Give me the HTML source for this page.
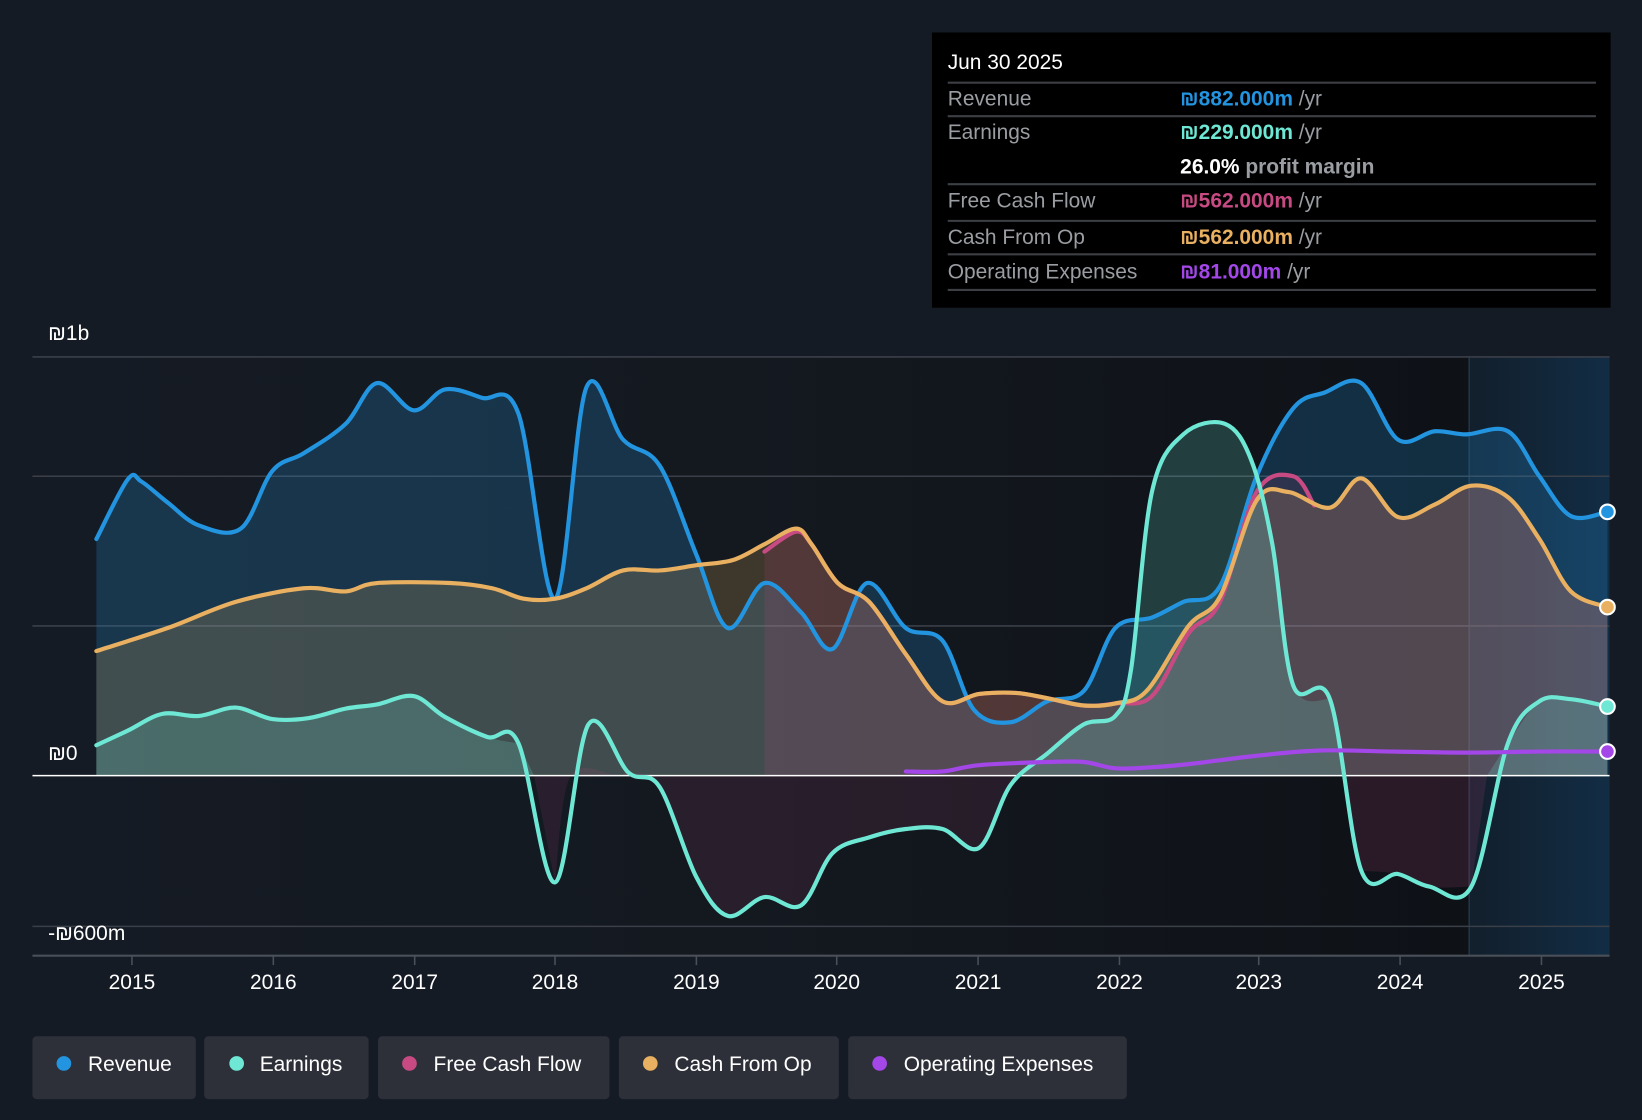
<!DOCTYPE html>
<html><head><meta charset="utf-8"><style>
html,body{margin:0;padding:0;background:#151b24;width:1642px;height:1120px;overflow:hidden}
svg{display:block}
text{font-family:"Liberation Sans",sans-serif}
</style></head><body>
<svg id="c" width="1642" height="1120" viewBox="0 0 1568 1070" preserveAspectRatio="none" xmlns="http://www.w3.org/2000/svg">
<defs>
<linearGradient id="bg" x1="0" x2="1" y1="0" y2="0">
<stop offset="0" stop-color="#151b24"/><stop offset="0.45" stop-color="#141920"/><stop offset="1" stop-color="#0d1015"/></linearGradient>
<linearGradient id="hl" x1="0" x2="1"><stop offset="0" stop-color="#12202e"/><stop offset="1" stop-color="#13304a"/></linearGradient>
</defs>
<rect width="1568" height="1070" fill="#151b24"/>
<rect x="31" y="341" width="1506" height="572" fill="url(#bg)"/>
<rect x="1403" y="341" width="134" height="572" fill="url(#hl)" opacity="0.9"/>
<line x1="1403" y1="341" x2="1403" y2="913" stroke="#233447" stroke-width="1.5"/>
<g stroke="#3a3f48" stroke-width="1.5">
<line x1="31" y1="341" x2="1537" y2="341"/><line x1="31" y1="455" x2="1537" y2="455"/>
<line x1="31" y1="598" x2="1537" y2="598"/><line x1="31" y1="885" x2="1537" y2="885"/>
</g>
<polygon class="f" fill="#2394df" fill-opacity="0.22" points="92,741 92,515 122,458 135,460 160,480 190,502 230,505 260,450 290,433 330,405 360,366 395,392 425,372 460,380 495,395 530,572 560,370 595,420 630,445 665,530 695,600 730,557 765,585 795,620 828,557 865,600 900,612 930,678 965,690 1000,670 1035,660 1065,600 1100,590 1130,575 1165,560 1200,455 1235,390 1265,375 1300,366 1335,420 1370,412 1400,415 1440,412 1470,455 1500,493 1535,489 1535,741"/>
<polygon class="f" fill="#e8b060" fill-opacity="0.2" points="92,741 92,622 160,600 225,575 290,562 330,565 360,557 430,557 470,562 500,572 530,572 560,562 595,545 630,545 665,540 700,535 730,520 760,505 775,520 800,557 830,575 865,625 900,670 935,663 970,662 1000,667 1035,674 1065,672 1095,660 1135,598 1165,570 1200,478 1230,470 1270,485 1300,457 1335,494 1370,482 1405,464 1440,475 1470,515 1500,565 1535,580 1535,741"/>
<polygon class="f" fill="#c84a83" fill-opacity="0.15" points="730,741 730,527 760,508 775,520 800,557 830,575 865,625 900,670 935,663 970,662 1000,667 1035,674 1065,672 1100,665 1135,605 1165,575 1200,470 1235,455 1255,483 1270,485 1300,457 1335,494 1370,482 1405,464 1440,475 1470,515 1500,565 1535,580 1535,741"/>
<polygon class="f" fill="#6ee8d4" fill-opacity="0.2" points="92,741 92,712 122,698 155,682 190,684 225,676 260,687 295,686 330,677 360,673 395,665 425,685 465,704 495,710 510,741"/>
<polygon class="f" fill="#c84a83" fill-opacity="0.12" points="510,741 530,843 545,741 590,741 600,738 630,752 665,838 695,875 730,857 765,865 795,815 830,800 865,792 900,792 935,810 965,750 975,741"/>
<polygon class="f" fill="#6ee8d4" fill-opacity="0.2" points="975,741 1000,720 1035,692 1065,684 1080,640 1100,470 1130,415 1170,405 1195,440 1215,520 1235,655 1270,668 1285,741"/>
<polygon class="f" fill="#c84a83" fill-opacity="0.15" points="1285,741 1300,832 1335,835 1365,847 1405,847 1420,741"/>
<polygon class="f" fill="#6ee8d4" fill-opacity="0.2" points="1420,741 1440,710 1470,670 1500,668 1535,675 1535,741"/>
<line x1="31" y1="741" x2="1537" y2="741" stroke="#ffffff" stroke-width="1.5"/>
<g fill="none" stroke-width="4" stroke-linejoin="round" stroke-linecap="round">
<polyline class="l" stroke="#2394df" points="92,515 122,458 135,460 160,480 190,502 230,505 260,450 290,433 330,405 360,366 395,392 425,372 460,380 495,395 530,572 560,370 595,420 630,445 665,530 695,600 730,557 765,585 795,620 828,557 865,600 900,612 930,678 965,690 1000,670 1035,660 1065,600 1100,590 1130,575 1165,560 1200,455 1235,390 1265,375 1300,366 1335,420 1370,412 1400,415 1440,412 1470,455 1500,493 1535,489"/>
<polyline class="l" stroke="#c84a83" points="730,527 760,508 775,520 800,557 830,575 865,625 900,670 935,663 970,662 1000,667 1035,674 1065,672 1100,665 1135,605 1165,575 1200,470 1235,455 1255,483"/>
<polyline class="l" stroke="#e8b060" points="92,622 160,600 225,575 290,562 330,565 360,557 430,557 470,562 500,572 530,572 560,562 595,545 630,545 665,540 700,535 730,520 760,505 775,520 800,557 830,575 865,625 900,670 935,663 970,662 1000,667 1035,674 1065,672 1095,660 1135,598 1165,570 1200,478 1230,470 1270,485 1300,457 1335,494 1370,482 1405,464 1440,475 1470,515 1500,565 1535,580"/>
<polyline class="l" stroke="#6ee8d4" points="92,712 122,698 155,682 190,684 225,676 260,687 295,686 330,677 360,673 395,665 425,685 465,704 495,710 530,843 562,692 600,738 630,752 665,838 695,875 730,857 765,865 795,815 830,800 865,792 900,792 935,810 965,750 1000,720 1035,692 1065,684 1080,640 1100,470 1130,415 1170,405 1195,440 1215,520 1235,655 1270,668 1300,832 1335,835 1365,847 1405,847 1440,710 1470,670 1500,668 1535,675"/>
<polyline class="l" stroke="#a347e8" points="865,737 900,737 935,731 1000,728 1035,728 1065,734 1100,733 1135,730 1200,722 1260,717 1330,718 1400,719 1470,718 1535,718"/>
</g>
<g stroke="#fff" stroke-width="2">
<circle cx="1535" cy="489" r="7" fill="#2394df"/><circle cx="1535" cy="580" r="7" fill="#e8b060"/>
<circle cx="1535" cy="675" r="7" fill="#6ee8d4"/><circle cx="1535" cy="718" r="7" fill="#a347e8"/>
</g>
<line x1="31" y1="913" x2="1537" y2="913" stroke="#4a4f58" stroke-width="2"/>
<g stroke="#4a4f58" stroke-width="1.5">
<line x1="126" y1="913" x2="126" y2="922"/><line x1="261" y1="913" x2="261" y2="922"/><line x1="396" y1="913" x2="396" y2="922"/><line x1="530" y1="913" x2="530" y2="922"/><line x1="665" y1="913" x2="665" y2="922"/><line x1="799" y1="913" x2="799" y2="922"/><line x1="934" y1="913" x2="934" y2="922"/><line x1="1069" y1="913" x2="1069" y2="922"/><line x1="1202" y1="913" x2="1202" y2="922"/><line x1="1337" y1="913" x2="1337" y2="922"/><line x1="1472" y1="913" x2="1472" y2="922"/>
</g>
<g fill="#fff" font-size="20" text-anchor="middle">
<text x="126" y="945">2015</text><text x="261" y="945">2016</text><text x="396" y="945">2017</text><text x="530" y="945">2018</text><text x="665" y="945">2019</text><text x="799" y="945">2020</text><text x="934" y="945">2021</text><text x="1069" y="945">2022</text><text x="1202" y="945">2023</text><text x="1337" y="945">2024</text><text x="1472" y="945">2025</text>
</g>
<g fill="#fff" font-size="20">
<text x="46" y="325">₪1b</text><text x="46" y="726">₪0</text><text x="46" y="898">-₪600m</text>
</g>
<rect x="890" y="31" width="648" height="263" fill="#000"/>
<g stroke="#3c3f44" stroke-width="2">
<line x1="905" y1="79" x2="1524" y2="79"/><line x1="905" y1="111" x2="1524" y2="111"/><line x1="905" y1="176" x2="1524" y2="176"/><line x1="905" y1="211" x2="1524" y2="211"/><line x1="905" y1="243" x2="1524" y2="243"/><line x1="905" y1="277" x2="1524" y2="277"/>
</g>
<g font-size="20">
<text x="905" y="66" fill="#fff">Jun 30 2025</text>
<text x="905" y="101" fill="#9a9da2">Revenue</text>
<text x="905" y="133" fill="#9a9da2">Earnings</text>
<text x="905" y="198" fill="#9a9da2">Free Cash Flow</text>
<text x="905" y="233" fill="#9a9da2">Cash From Op</text>
<text x="905" y="266" fill="#9a9da2">Operating Expenses</text>
<text x="1127" y="101" fill="#2394df" font-weight="bold">₪882.000m <tspan fill="#9a9da2" font-weight="normal">/yr</tspan></text>
<text x="1127" y="133" fill="#6ee8d4" font-weight="bold">₪229.000m <tspan fill="#9a9da2" font-weight="normal">/yr</tspan></text>
<text x="1127" y="166" fill="#fff" font-weight="bold">26.0% <tspan fill="#9a9da2">profit margin</tspan></text>
<text x="1127" y="198" fill="#c84a83" font-weight="bold">₪562.000m <tspan fill="#9a9da2" font-weight="normal">/yr</tspan></text>
<text x="1127" y="233" fill="#e8b060" font-weight="bold">₪562.000m <tspan fill="#9a9da2" font-weight="normal">/yr</tspan></text>
<text x="1127" y="266" fill="#a347e8" font-weight="bold">₪81.000m <tspan fill="#9a9da2" font-weight="normal">/yr</tspan></text>
</g>
<g fill="#2d3039">
<rect x="31" y="990" width="156" height="60" rx="4"/><rect x="195" y="990" width="157" height="60" rx="4"/><rect x="361" y="990" width="221" height="60" rx="4"/><rect x="591" y="990" width="210" height="60" rx="4"/><rect x="810" y="990" width="266" height="60" rx="4"/>
</g>
<circle cx="61" cy="1016" r="7" fill="#2394df"/><circle cx="226" cy="1016" r="7" fill="#6ee8d4"/><circle cx="391" cy="1016" r="7" fill="#c84a83"/><circle cx="621" cy="1016" r="7" fill="#e8b060"/><circle cx="840" cy="1016" r="7" fill="#a347e8"/>
<g fill="#fff" font-size="20">
<text x="84" y="1023">Revenue</text><text x="248" y="1023">Earnings</text><text x="414" y="1023">Free Cash Flow</text><text x="644" y="1023">Cash From Op</text><text x="863" y="1023">Operating Expenses</text>
</g>
</svg>
<script>
(function(){
var NS="http://www.w3.org/2000/svg";
function parse(s){return s.trim().split(/\s+/).map(function(p){var a=p.split(",");return [+a[0],+a[1]];});}
function cr(p){
 var d="";
 for(var i=0;i<p.length-1;i++){
  var p0=p[i>0?i-1:i],p1=p[i],p2=p[i+1],p3=p[i+2<p.length?i+2:i+1];
  var c1=[p1[0]+(p2[0]-p0[0])/6,p1[1]+(p2[1]-p0[1])/6];
  var c2=[p2[0]-(p3[0]-p1[0])/6,p2[1]-(p3[1]-p1[1])/6];
  d+=" C"+c1[0].toFixed(1)+","+c1[1].toFixed(1)+" "+c2[0].toFixed(1)+","+c2[1].toFixed(1)+" "+p2[0]+","+p2[1];
 }
 return d;
}
function repl(el,closed){
 var p=parse(el.getAttribute("points"));
 var path=document.createElementNS(NS,"path");
 for(var k=0;k<el.attributes.length;k++){var a=el.attributes[k];if(a.name!=="points"&&a.name!=="class")path.setAttribute(a.name,a.value);}
 var d;
 if(closed){
  var first=p[0],last=p[p.length-1],mid=p.slice(1,p.length-1);
  d="M"+first[0]+","+first[1]+" L"+mid[0][0]+","+mid[0][1]+cr(mid)+" L"+last[0]+","+last[1]+" Z";
 } else {
  d="M"+p[0][0]+","+p[0][1]+cr(p);
 }
 path.setAttribute("d",d);
 el.parentNode.replaceChild(path,el);
}
try{
 Array.prototype.slice.call(document.querySelectorAll("polygon.f")).forEach(function(e){repl(e,true);});
 Array.prototype.slice.call(document.querySelectorAll("polyline.l")).forEach(function(e){repl(e,false);});
}catch(e){}
})();
</script>
</body></html>
